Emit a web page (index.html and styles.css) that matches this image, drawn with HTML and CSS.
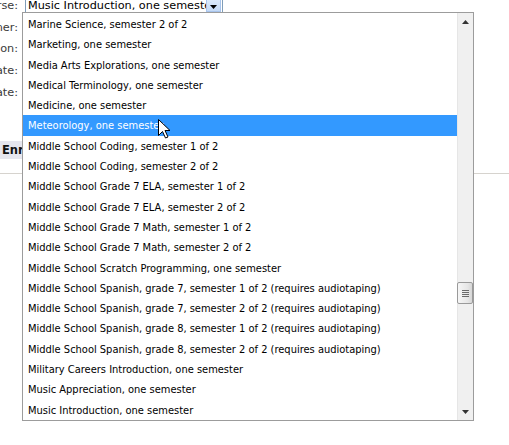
FILE: index.html
```html
<!DOCTYPE html>
<html>
<head>
<meta charset="utf-8">
<link rel="stylesheet" href="styles.css">
</head>
<body>
<div class="page">
  <div class="form">
    <div class="row">
      <div class="label"><span>Course:</span></div>
      <div class="select">
        <span class="value">Music Introduction, one semester</span>
        <span class="drop"><svg width="7" height="4" viewBox="0 0 7 4"><path d="M0 0H7L3.5 4Z" fill="#000"/></svg></span>
      </div>
    </div>
    <div class="row"><div class="label"><span>Learner:</span></div></div>
    <div class="row"><div class="label"><span>Session:</span></div></div>
    <div class="row"><div class="label"><span>Start Date:</span></div></div>
    <div class="row"><div class="label"><span>End Date:</span></div></div>
  </div>
  <div class="actions"><span class="enroll">Enroll</span></div>
  <div class="rule"></div>

  <div class="popup">
    <ul class="options">
      <li>Marine Science, semester 2 of 2</li>
      <li>Marketing, one semester</li>
      <li>Media Arts Explorations, one semester</li>
      <li>Medical Terminology, one semester</li>
      <li>Medicine, one semester</li>
      <li class="hover">Meteorology, one semester</li>
      <li>Middle School Coding, semester 1 of 2</li>
      <li>Middle School Coding, semester 2 of 2</li>
      <li>Middle School Grade 7 ELA, semester 1 of 2</li>
      <li>Middle School Grade 7 ELA, semester 2 of 2</li>
      <li>Middle School Grade 7 Math, semester 1 of 2</li>
      <li>Middle School Grade 7 Math, semester 2 of 2</li>
      <li>Middle School Scratch Programming, one semester</li>
      <li>Middle School Spanish, grade 7, semester 1 of 2 (requires audiotaping)</li>
      <li>Middle School Spanish, grade 7, semester 2 of 2 (requires audiotaping)</li>
      <li>Middle School Spanish, grade 8, semester 1 of 2 (requires audiotaping)</li>
      <li>Middle School Spanish, grade 8, semester 2 of 2 (requires audiotaping)</li>
      <li>Military Careers Introduction, one semester</li>
      <li>Music Appreciation, one semester</li>
      <li>Music Introduction, one semester</li>
    </ul>
    <div class="scrollbar">
      <div class="arrow"><svg width="7" height="4" viewBox="0 0 7 4"><path d="M3.5 0L7 4H0Z" fill="#333"/></svg></div>
      <div class="track">
        <div class="thumb"><i></i><i></i><i></i><i></i></div>
      </div>
      <div class="arrow"><svg width="7" height="4" viewBox="0 0 7 4"><path d="M0 0H7L3.5 4Z" fill="#333"/></svg></div>
    </div>
  </div>

  <svg class="cursor" width="13" height="20" viewBox="0 0 13 20"><path d="M0.5 0.5V16.5L4.5 12.5L7.5 19L10 18L7 11.5H12Z" fill="#fff" stroke="#000" stroke-width="1" stroke-linejoin="miter"/></svg>
</div>
</body>
</html>
```

FILE: styles.css
```css
html, body {
  margin: 0;
  padding: 0;
  background: #fff;
}

.page {
  position: relative;
  width: 509px;
  height: 445px;
  overflow: hidden;
  font-family: "DejaVu Sans", Verdana, sans-serif;
}

.form {
  display: flex;
  flex-direction: column;
  margin-top: -6px;
}

.row {
  display: flex;
  align-items: flex-start;
  gap: 7px;
  height: 21.75px;
}

.label {
  width: 18px;
  height: 21.75px;
  padding-top: 1px;
  box-sizing: border-box;
  display: flex;
  justify-content: flex-end;
  align-items: center;
  overflow: hidden;
  white-space: nowrap;
  font-size: 11.25px;
  color: #3a3a3a;
  flex-shrink: 0;
}

.select {
  width: 193px;
  height: 16px;
  border: 1px solid #7f9db9;
  display: flex;
  align-items: stretch;
  padding: 1px 1px 1px 2px;
  overflow: hidden;
}

.select .value {
  flex: 1;
  overflow: hidden;
  white-space: nowrap;
  font-size: 11.25px;
  line-height: 16px;
  padding-top: 2px;
  color: #000;
}

.drop {
  width: 15px;
  flex-shrink: 0;
  border: 1px solid #a8c4ec;
  box-sizing: border-box;
  background: linear-gradient(#e2eefc, #c4daf6);
  display: flex;
  align-items: center;
  justify-content: center;
  padding-top: 6px;
}

.actions {
  margin-top: 38px;
  height: 18px;
  display: flex;
}

.enroll {
  width: 80px;
  background: #e6e6ee;
  font-weight: bold;
  font-size: 11.5px;
  line-height: 18px;
  padding-left: 2px;
  color: #111;
}

.rule {
  margin-top: 14px;
  height: 1px;
  background: #d6d3ce;
}

.popup {
  position: absolute;
  left: 22px;
  top: 12px;
  width: 450px;
  height: 407px;
  border: 1px solid #9c9c9c;
  background: #fff;
  display: flex;
}

.options {
  list-style: none;
  margin: 0;
  padding: 1px 0 0;
  flex: 1;
  font-family: "DejaVu Sans Condensed", "DejaVu Sans", sans-serif;
  font-stretch: condensed;
  font-size: 11px;
  color: #000;
}

.options li {
  height: 20.3px;
  line-height: 21px;
  padding-left: 5px;
  white-space: nowrap;
  overflow: hidden;
}

.options li.hover {
  background: #3399ff;
  color: #fff;
}

.scrollbar {
  width: 16px;
  flex-shrink: 0;
  display: flex;
  flex-direction: column;
  background: #f0f0f0;
  border-left: 1px solid #e6e6e6;
  box-sizing: border-box;
}

.arrow {
  height: 17px;
  display: flex;
  align-items: center;
  justify-content: center;
}

.track {
  flex: 1;
  display: flex;
  flex-direction: column;
}

.thumb {
  margin-top: 252px;
  margin-left: -1px;
  height: 20px;
  border: 1px solid #9a9a9a;
  border-radius: 2px;
  background: linear-gradient(90deg, #f6f6f6, #e6e6e6 70%, #d6d6d6);
  display: flex;
  flex-direction: column;
  justify-content: center;
  align-items: center;
  gap: 1px;
}

.thumb i {
  display: block;
  width: 7px;
  height: 1px;
  background: #6a6a6a;
}

.cursor {
  position: absolute;
  left: 158px;
  top: 119px;
}
```
